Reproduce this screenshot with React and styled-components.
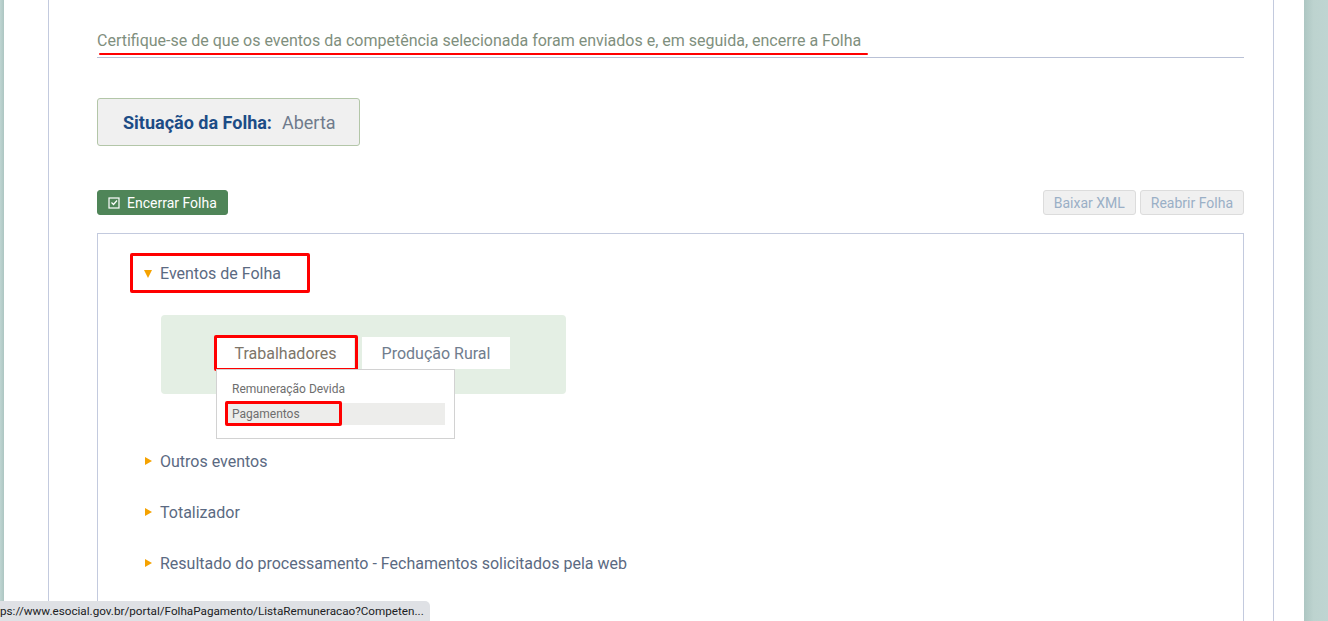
import React from 'react';
import styled, { createGlobalStyle } from 'styled-components';

const GlobalStyle = createGlobalStyle`
  html, body {
    margin: 0;
    padding: 0;
    height: 100%;
    overflow: hidden;
  }
  body {
    font-family: Roboto, "Liberation Sans", Arial, sans-serif;
    background: #fff;
  }
`;

const Screen = styled.div`
  display: flex;
  width: 1328px;
  height: 621px;
  overflow: hidden;
  position: relative;
`;

const SideStrip = styled.div`
  flex: 0 0 ${p => p.$w}px;
  background: ${p =>
    p.$right
      ? 'linear-gradient(90deg, #adc6c2 0%, #bdd3cf 40%, #bfd5d2 100%)'
      : 'linear-gradient(90deg, #bfd5d2 0%, #adc6c2 100%)'};
`;

const Page = styled.div`
  flex: 1;
  background: #fff;
  padding-left: 44px;
  padding-right: 30px;
  display: flex;
`;

const Column = styled.div`
  flex: 1;
  border-left: 1px solid #c3cade;
  border-right: 1px solid #c3cade;
  padding: 32px 29px 0 48px;
`;

const Notice = styled.div`
  border-bottom: 1px solid #b9c1d6;
  padding-bottom: 7px;
  font-size: 16px;
  color: #7f8f7e;
  line-height: 18px;
`;

const Marked = styled.span`
  position: relative;
  &::after {
    content: '';
    position: absolute;
    left: 2px;
    right: -7px;
    bottom: -5px;
    height: 2px;
    border-radius: 2px;
    background: #ff0000;
  }
`;

const StatusBox = styled.div`
  margin-top: 40px;
  width: 263px;
  height: 48px;
  box-sizing: border-box;
  background: #f0f0f0;
  border: 1px solid #b3c6a8;
  border-radius: 3px;
  display: flex;
  align-items: center;
  padding-left: 25px;
  font-size: 18px;
`;

const StatusLabel = styled.span`
  color: #1c4c86;
  font-weight: 700;
  margin-right: 10px;
`;

const StatusValue = styled.span`
  color: #6f7b8c;
`;

const Actions = styled.div`
  margin-top: 44px;
  display: flex;
  align-items: center;
  gap: 4px;
`;

const Spacer = styled.div`
  flex: 1;
`;

const Button = styled.button`
  height: 25px;
  box-sizing: border-box;
  border-radius: 3px;
  font-family: inherit;
  font-size: 14px;
  padding: 0 10px;
  display: inline-flex;
  align-items: center;
  gap: 7px;
  cursor: pointer;
  background: ${p => (p.$primary ? '#4f8558' : '#f0f0f0')};
  color: ${p => (p.$primary ? '#ffffff' : '#9aafc6')};
  border: 1px solid ${p => (p.$primary ? '#4f8558' : '#dcdcdc')};
`;

const Panel = styled.div`
  margin-top: 18px;
  border: 1px solid #c3cade;
  border-bottom: none;
  height: 420px;
  padding: 27px 0 0 46px;
`;

const Section = styled.div`
  display: flex;
  flex-direction: column;
`;

const SectionTitle = styled.div`
  display: inline-flex;
  align-items: center;
  gap: 8px;
  height: 24px;
  font-size: 16px;
  color: #5b6a82;
  margin-bottom: ${p => p.$gap}px;
  position: relative;
  align-self: flex-start;
`;

const Arrow = styled.span`
  width: 0;
  height: 0;
  ${p =>
    p.$open
      ? `border-left: 4px solid transparent;
         border-right: 4px solid transparent;
         border-top: 8px solid #f5a200;
         margin-top: 2px;`
      : `border-top: 4px solid transparent;
         border-bottom: 4px solid transparent;
         border-left: 7px solid #f5a200;
         margin-left: 1px;`}
`;

const RedFrame = styled.span`
  position: absolute;
  top: ${p => p.$t}px;
  left: ${p => p.$l}px;
  width: ${p => p.$w}px;
  height: ${p => p.$h}px;
  border: 3px solid #ff0000;
  border-radius: 2px;
  box-sizing: border-box;
  pointer-events: none;
`;

const TabArea = styled.div`
  margin: 0 0 55px 17px;
  width: 405px;
  height: 79px;
  box-sizing: border-box;
  background: #e4efe4;
  border-radius: 4px;
  display: flex;
  justify-content: center;
  padding-top: 22px;
`;

const Tabs = styled.div`
  display: flex;
  gap: 8px;
  height: 32px;
`;

const Tab = styled.div`
  position: relative;
  width: ${p => p.$w}px;
  background: #fff;
  display: flex;
  align-items: center;
  justify-content: center;
  font-size: 16px;
  color: ${p => (p.$active ? '#7d7569' : '#707d8e')};
`;

const Menu = styled.div`
  position: absolute;
  top: 32px;
  left: -1px;
  width: 239px;
  box-sizing: border-box;
  background: #fff;
  border: 1px solid #d2d2d2;
  padding: 8px 9px 10px 8px;
  z-index: 2;
`;

const MenuItem = styled.div`
  position: relative;
  height: 22px;
  display: flex;
  align-items: center;
  padding-left: 7px;
  margin-bottom: 3px;
  font-size: 12px;
  color: #6e6e6e;
  background: ${p => (p.$hover ? '#ededeb' : 'transparent')};
`;

const StatusBar = styled.div`
  position: absolute;
  left: 0;
  bottom: 0;
  height: 20px;
  padding-right: 6px;
  box-sizing: border-box;
  background: #dfe1e5;
  border-top-right-radius: 5px;
  font-size: 11.7px;
  color: #202124;
  display: flex;
  align-items: center;
  white-space: nowrap;
  font-family: "Segoe UI", Roboto, "Liberation Sans", sans-serif;
`;

const CheckIcon = () => (
  <svg width="12" height="12" viewBox="0 0 12 12" fill="none" stroke="#fff" strokeWidth="1.2">
    <rect x="1" y="1" width="10" height="10" />
    <path d="M3.5 5.5 L5.5 7.5 L9 3.5" />
  </svg>
);

const sections = [
  { key: 'outros', title: 'Outros eventos' },
  { key: 'total', title: 'Totalizador' },
  { key: 'result', title: 'Resultado do processamento - Fechamentos solicitados pela web' },
];

export default function App() {
  return (
    <>
      <GlobalStyle />
      <Screen>
        <SideStrip $w={4} />
        <Page>
          <Column>
            <Notice>
              <Marked>
                Certifique-se de que os eventos da competência selecionada foram enviados e, em seguida, encerre a Folha
              </Marked>
            </Notice>

            <StatusBox>
              <StatusLabel>Situação da Folha:</StatusLabel>
              <StatusValue>Aberta</StatusValue>
            </StatusBox>

            <Actions>
              <Button $primary>
                <CheckIcon />
                Encerrar Folha
              </Button>
              <Spacer />
              <Button>Baixar XML</Button>
              <Button>Reabrir Folha</Button>
            </Actions>

            <Panel>
              <Section>
                <SectionTitle $gap={30}>
                  <Arrow $open />
                  Eventos de Folha
                  <RedFrame $t={-8} $l={-14} $w={180} $h={40} />
                </SectionTitle>

                <TabArea>
                  <Tabs>
                    <Tab $w={137} $active>
                      Trabalhadores
                      <RedFrame $t={-2} $l={-3} $w={144} $h={36} />
                      <Menu>
                        <MenuItem>Remuneração Devida</MenuItem>
                        <MenuItem $hover>
                          Pagamentos
                          <RedFrame $t={-2} $l={0} $w={117} $h={25} />
                        </MenuItem>
                      </Menu>
                    </Tab>
                    <Tab $w={148}>Produção Rural</Tab>
                  </Tabs>
                </TabArea>

                {sections.map(({ key, title }) => (
                  <SectionTitle key={key} $gap={27}>
                    <Arrow />
                    {title}
                  </SectionTitle>
                ))}
              </Section>
            </Panel>
          </Column>
        </Page>
        <SideStrip $w={24} $right />
        <StatusBar>ps://www.esocial.gov.br/portal/FolhaPagamento/ListaRemuneracao?Competen...</StatusBar>
      </Screen>
    </>
  );
}
